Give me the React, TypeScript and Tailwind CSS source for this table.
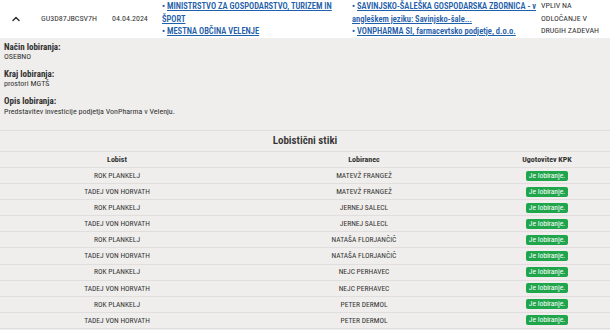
import { ChevronUp } from 'lucide-react';

type Stik = { lobist: string; lobiranec: string };

const stiki: Stik[] = [
  { lobist: 'ROK PLANKELJ', lobiranec: 'MATEVŽ FRANGEŽ' },
  { lobist: 'TADEJ VON HORVATH', lobiranec: 'MATEVŽ FRANGEŽ' },
  { lobist: 'ROK PLANKELJ', lobiranec: 'JERNEJ SALECL' },
  { lobist: 'TADEJ VON HORVATH', lobiranec: 'JERNEJ SALECL' },
  { lobist: 'ROK PLANKELJ', lobiranec: 'NATAŠA FLORJANČIČ' },
  { lobist: 'TADEJ VON HORVATH', lobiranec: 'NATAŠA FLORJANČIČ' },
  { lobist: 'ROK PLANKELJ', lobiranec: 'NEJC PERHAVEC' },
  { lobist: 'TADEJ VON HORVATH', lobiranec: 'NEJC PERHAVEC' },
  { lobist: 'ROK PLANKELJ', lobiranec: 'PETER DERMOL' },
  { lobist: 'TADEJ VON HORVATH', lobiranec: 'PETER DERMOL' }
];

const font = "font-['Liberation_Sans_Narrow','Roboto_Condensed','Liberation_Sans',sans-serif]";

function Detail({ label, value }: { label: string; value: string }) {
  return (
    <div className="mb-[7px]">
      <div className="text-[9px] font-bold leading-[10px] text-[#333]">{label}</div>
      <div className="text-[8px] leading-[10px] text-[#333]">{value}</div>
    </div>
  );
}

function LinkItem({ children }: { children: string }) {
  return (
    <li className="before:content-['•_']">
      <span className="underline">{children}</span>
    </li>
  );
}

export default function App() {
  return (
    <div className={`h-[330px] w-[610px] overflow-hidden bg-[#efeeec] text-[#333] ${font}`}>
      {/* vrstica zapisa */}
      <div className="grid h-[38px] grid-cols-[41px_71px_50px_190px_189px_1fr] items-center bg-white text-[8px] leading-[12.5px]">
        <div className="flex justify-center pr-[10px]">
          <ChevronUp className="h-[12px] w-[12px]" strokeWidth={3} />
        </div>
        <div>GU3D87JBCSV7H</div>
        <div>04.04.2024</div>
        <ul className="pr-[12px] text-[8.5px] font-semibold text-[#1f60aa]">
          <LinkItem>MINISTRSTVO ZA GOSPODARSTVO, TURIZEM IN ŠPORT</LinkItem>
          <LinkItem>MESTNA OBČINA VELENJE</LinkItem>
        </ul>
        <ul className="text-[8.5px] font-semibold text-[#1f60aa]">
          <LinkItem>SAVINJSKO-ŠALEŠKA GOSPODARSKA ZBORNICA - v angleškem jeziku: Savinjsko-šale...</LinkItem>
          <LinkItem>VONPHARMA SI, farmacevtsko podjetje, d.o.o.</LinkItem>
        </ul>
        <div className="pr-[4px]">VPLIV NA ODLOČANJE V DRUGIH ZADEVAH</div>
      </div>

      {/* podrobnosti */}
      <div className="px-[4px] pt-[4px]">
        <Detail label="Način lobiranja:" value="OSEBNO" />
        <Detail label="Kraj lobiranja:" value="prostori MGTŠ" />
        <div>
          <div className="text-[9px] font-bold leading-[10px]">Opis lobiranja:</div>
          <div className="text-[8px] leading-[12px]">Predstavitev investicije podjetja VonPharma v Velenju.</div>
        </div>
      </div>

      {/* lobistični stiki */}
      <div className="mt-[12px] border-t border-[#e0dfdd]">
        <div className="flex h-[21px] items-center justify-center border-b border-[#e0dfdd] text-[11px] font-semibold">
          Lobistični stiki
        </div>
        <div className="grid h-[16px] grid-cols-[234px_260px_106px] items-center border-b border-[#e0dfdd] text-center text-[8px] font-bold">
          <div>Lobist</div>
          <div>Lobiranec</div>
          <div>Ugotovitev KPK</div>
        </div>
        {stiki.map((s, i) => (
          <div
            key={i}
            className="grid h-[16.1px] grid-cols-[234px_260px_106px] items-center border-b border-[#e0dfdd] text-center text-[7.5px]"
          >
            <div>{s.lobist}</div>
            <div>{s.lobiranec}</div>
            <div className="flex justify-center">
              <span className="rounded-[2px] bg-[#1fa54c] px-[3px] text-[7.5px] leading-[10px] text-white">Je lobiranje.</span>
            </div>
          </div>
        ))}
      </div>
    </div>
  );
}
